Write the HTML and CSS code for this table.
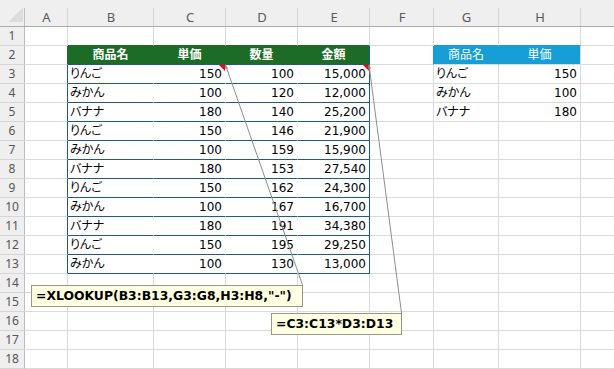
FILE: index.html
```html
<!DOCTYPE html>
<html lang="ja">
  <head>
    <meta charset="UTF-8" />
    <meta name="viewport" content="width=device-width, initial-scale=1.0" />
    <title>XLOOKUP</title>
    <link rel="stylesheet" href="styles.css">
  </head>
  <body>
    <div class="page">
      <div class="sheet">
        <div class="ch corner"></div><div class="ch">A</div><div class="ch">B</div><div class="ch">C</div><div class="ch">D</div><div class="ch">E</div><div class="ch">F</div><div class="ch">G</div><div class="ch">H</div><div class="ch"></div>

        <div class="rh">1</div><div></div><div class="over-g"></div><div class="over-g"></div><div class="over-g"></div><div class="over-g"></div><div></div><div class="over-b"></div><div class="over-b"></div><div></div>

        <div class="rh">2</div><div class="edge-g"></div><div class="th">商品名</div><div class="th">単価</div><div class="th">数量</div><div class="th last">金額</div><div class="edge-b"></div><div class="bh">商品名</div><div class="bh last">単価</div><div></div>

        <div class="rh">3</div><div class="edge"></div><div class="td">りんご</div><div class="td num">150<span class="note"></span></div><div class="td num">100</div><div class="td num last">15,000<span class="note"></span></div><div></div><div>りんご</div><div class="num">150</div><div></div>
        <div class="rh">4</div><div class="edge"></div><div class="td">みかん</div><div class="td num">100</div><div class="td num">120</div><div class="td num last">12,000</div><div></div><div>みかん</div><div class="num">100</div><div></div>
        <div class="rh">5</div><div class="edge"></div><div class="td">バナナ</div><div class="td num">180</div><div class="td num">140</div><div class="td num last">25,200</div><div></div><div>バナナ</div><div class="num">180</div><div></div>
        <div class="rh">6</div><div class="edge"></div><div class="td">りんご</div><div class="td num">150</div><div class="td num">146</div><div class="td num last">21,900</div><div></div><div></div><div></div><div></div>
        <div class="rh">7</div><div class="edge"></div><div class="td">みかん</div><div class="td num">100</div><div class="td num">159</div><div class="td num last">15,900</div><div></div><div></div><div></div><div></div>
        <div class="rh">8</div><div class="edge"></div><div class="td">バナナ</div><div class="td num">180</div><div class="td num">153</div><div class="td num last">27,540</div><div></div><div></div><div></div><div></div>
        <div class="rh">9</div><div class="edge"></div><div class="td">りんご</div><div class="td num">150</div><div class="td num">162</div><div class="td num last">24,300</div><div></div><div></div><div></div><div></div>
        <div class="rh">10</div><div class="edge"></div><div class="td">みかん</div><div class="td num">100</div><div class="td num">167</div><div class="td num last">16,700</div><div></div><div></div><div></div><div></div>
        <div class="rh">11</div><div class="edge"></div><div class="td">バナナ</div><div class="td num">180</div><div class="td num">191</div><div class="td num last">34,380</div><div></div><div></div><div></div><div></div>
        <div class="rh">12</div><div class="edge"></div><div class="td">りんご</div><div class="td num">150</div><div class="td num">195</div><div class="td num last">29,250</div><div></div><div></div><div></div><div></div>
        <div class="rh">13</div><div class="edge"></div><div class="td">みかん</div><div class="td num">100</div><div class="td num">130</div><div class="td num last">13,000</div><div></div><div></div><div></div><div></div>

        <div class="rh">14</div><div></div><div></div><div></div><div></div><div></div><div></div><div></div><div></div><div></div>
        <div class="rh">15</div><div></div><div></div><div></div><div></div><div></div><div></div><div></div><div></div><div></div>
        <div class="rh">16</div><div></div><div></div><div></div><div></div><div></div><div></div><div></div><div></div><div></div>
        <div class="rh">17</div><div></div><div></div><div></div><div></div><div></div><div></div><div></div><div></div><div></div>
        <div class="rh">18</div><div></div><div></div><div></div><div></div><div></div><div></div><div></div><div></div><div></div>
      </div>

      <!-- comment leader lines -->
      <svg class="leaders" width="614" height="369" viewBox="0 0 614 369">
        <line x1="225.5" y1="65" x2="302.5" y2="285" />
        <line x1="369" y1="65" x2="401.5" y2="313" />
        <path d="M225 64 L228.1 68.2 L225.3 69.2 Z" />
        <path d="M369 64 L371.2 68.8 L368.2 69.2 Z" />
      </svg>

      <div class="callout c1">=XLOOKUP(B3:B13,G3:G8,H3:H8,"-")</div>
      <div class="callout c2">=C3:C13*D3:D13</div>
    </div>
  </body>
</html>
```

FILE: styles.css
```css
body {
  margin: 0;
  overflow: hidden;
  background-color: #fff;
  font-family: "DejaVu Sans", "Noto Sans CJK JP", sans-serif;
  font-size: 12px;
  color: #000;
  font-feature-settings: "palt";
}
.page {
  position: relative;
  width: 614px;
  height: 369px;
  overflow: hidden;
}
.sheet {
  display: grid;
  grid-template-columns: 25px 43px 86px 72px 72px 72px 64px 65px 82px 80px;
  grid-template-rows: 27px repeat(18, 19px);
  width: max-content;
}
.sheet > div {
  box-sizing: border-box;
  border-right: 1px solid #dadada;
  border-bottom: 1px solid #dadada;
  padding: 1px 2px 0;
  line-height: 17px;
  white-space: nowrap;
  overflow: hidden;
}

/* headers */
.sheet > .ch {
  border-right: 0;
  border-bottom: 1px solid #ababab;
  padding: 8px 0 0;
  line-height: 18px;
  text-align: center;
  background: linear-gradient(#d4d4d4, #d4d4d4) right bottom / 1px 18px no-repeat, #efefef;
  font-family: "Noto Sans", sans-serif;
  font-size: 13px;
  color: #5a5a5a;
}
.sheet > .corner {
  background:
    linear-gradient(to bottom right, transparent 50%, #dcdcdc 50%) right 2px bottom 4px / 15px 14px no-repeat,
    linear-gradient(#bdbdbd, #bdbdbd) right bottom / 1px 18px no-repeat,
    #efefef;
}
.sheet > .rh {
  background-color: #efefef;
  border-right-color: #bdbdbd;
  border-bottom-color: #d6d6d6;
  padding: 0;
  line-height: 18px;
  text-align: center;
  font-family: "Noto Sans", sans-serif;
  font-size: 12px;
  color: #555;
}

/* sales table */
.sheet > .over-g {
  border-bottom-color: #1c6b26;
}
.sheet > .edge-g {
  border-right-color: #1c6b26;
}
.sheet > .edge {
  border-right-color: #1f5b83;
}
.sheet > .th {
  background-color: #1c6b26;
  border-right-color: #1c6b26;
  border-bottom-color: #1f5b83;
  color: #fff;
  font-weight: bold;
  text-align: center;
}
.sheet > .td {
  position: relative;
  border-right-color: #fff;
  border-bottom-color: #1f5b83;
}
.sheet > .th.last,
.sheet > .td.last {
  border-right-color: #1f5b83;
}
.sheet > .num {
  padding-right: 3px;
  text-align: right;
}
.note {
  position: absolute;
  top: 0;
  right: 0;
  width: 0;
  height: 0;
  border-top: 6px solid #ff0000;
  border-left: 6px solid transparent;
}

/* price list */
.sheet > .over-b {
  border-bottom-color: #159fd6;
}
.sheet > .edge-b {
  border-right-color: #159fd6;
}
.sheet > .bh {
  background-color: #159fd6;
  border-right-color: #159fd6;
  color: #fff;
  text-align: center;
}
.sheet > .bh.last {
  border-right-color: #dadada;
}

/* comments */
.leaders {
  position: absolute;
  left: 0;
  top: 0;
  pointer-events: none;
}
.leaders line {
  stroke: #8e8e8e;
  stroke-width: 1;
}
.leaders path {
  fill: #8e8e8e;
}
.callout {
  position: absolute;
  box-sizing: border-box;
  height: 22px;
  padding: 0 4px;
  background-color: #ffffe1;
  border: 1px solid #97978a;
  font-family: "DejaVu Sans", sans-serif;
  font-weight: bold;
  font-size: 12.4px;
  line-height: 20px;
  white-space: nowrap;
}
.c1 {
  left: 31px;
  top: 285px;
  width: 272px;
}
.c2 {
  left: 271px;
  top: 313px;
  width: 131px;
}
```
